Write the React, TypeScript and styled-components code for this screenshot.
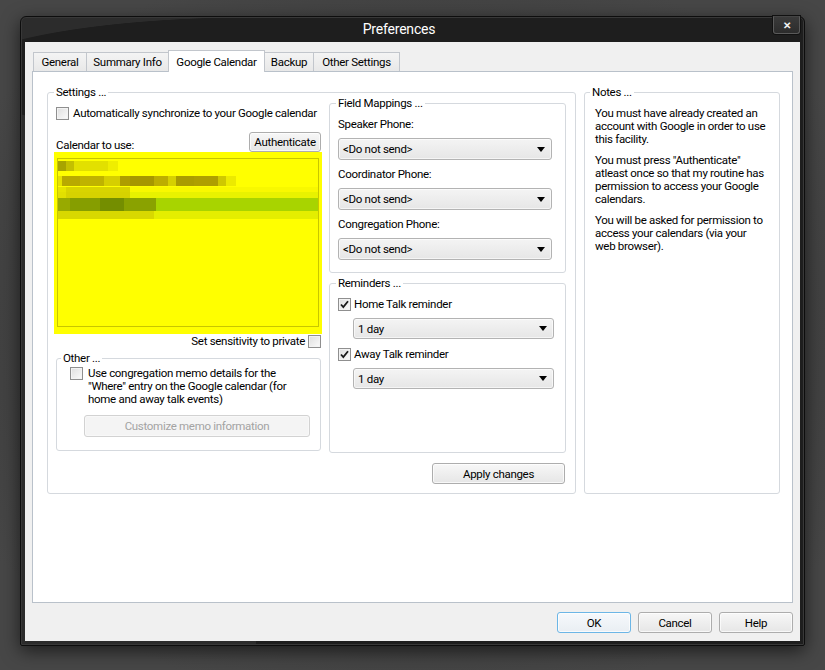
import styled, { createGlobalStyle } from "styled-components";

const GlobalStyle = createGlobalStyle`
  * { box-sizing: border-box; }
  html, body {
    margin: 0;
    padding: 0;
    background: #444444;
  }
  body {
    font-family: Roboto, "Liberation Sans", Arial, sans-serif;
    font-size: 11.5px;
    letter-spacing: -0.3px;
    color: #000;
  }
`;

type Seg = { w: number; c: string };
type MosaicLine = { gap: number; h: number; segs: Seg[] };

// pixelated (blurred out) calendar names inside the yellow highlight
const calendarRows: MosaicLine[] = [
  {
    gap: 2,
    h: 10,
    segs: [
      { w: 8, c: "#a8a400" },
      { w: 8, c: "#c4c000" },
      { w: 34, c: "#e2e000" },
      { w: 10, c: "#efee00" },
    ],
  },
  {
    gap: 5,
    h: 10,
    segs: [
      { w: 4, c: "#e6e200" },
      { w: 18, c: "#b8aa00" },
      { w: 24, c: "#bfb300" },
      { w: 16, c: "#d6cf00" },
      { w: 10, c: "#ad9d00" },
      { w: 24, c: "#a69700" },
      { w: 14, c: "#bcae00" },
      { w: 8, c: "#d6d000" },
      { w: 18, c: "#aa9c00" },
      { w: 24, c: "#ae9f00" },
      { w: 8, c: "#cfc800" },
      { w: 10, c: "#ecea00" },
    ],
  },
  {
    gap: 1,
    h: 5,
    segs: [
      { w: 8, c: "#e6e400" },
      { w: 64, c: "#d8d400" },
      { w: 188, c: "#f8f800" },
    ],
  },
  {
    gap: 0,
    h: 6,
    segs: [
      { w: 8, c: "#e2e000" },
      { w: 64, c: "#d6d200" },
      { w: 188, c: "#e8f200" },
    ],
  },
  {
    gap: 0,
    h: 13,
    segs: [
      { w: 12, c: "#98aa00" },
      { w: 30, c: "#869e00" },
      { w: 24, c: "#748e00" },
      { w: 32, c: "#8aa200" },
      { w: 163, c: "#a8d400" },
    ],
  },
  {
    gap: 0,
    h: 8,
    segs: [
      { w: 96, c: "#d8d800" },
      { w: 164, c: "#e4ee00" },
    ],
  },
];

function CheckBox({ checked = false }: { checked?: boolean }) {
  return (
    <Box>
      {checked && (
        <svg width="11" height="11" viewBox="0 0 11 11">
          <path
            d="M2 5.5 L4.3 8 L9 2.2"
            fill="none"
            stroke="#1a1a1a"
            strokeWidth="1.8"
          />
        </svg>
      )}
    </Box>
  );
}

function Dropdown({
  value,
  width,
  height,
}: {
  value: string;
  width: number;
  height: number;
}) {
  return (
    <Select $width={width} $height={height}>
      <span>{value}</span>
      <svg width="8" height="5" viewBox="0 0 8 5">
        <path d="M0 0 H8 L4 5 Z" fill="#000" />
      </svg>
    </Select>
  );
}

export default function App() {
  return (
    <Screen>
      <GlobalStyle />
      <Window>
        <TitleBar>
          <Title>Preferences</Title>
          <CloseButton>✕</CloseButton>
        </TitleBar>
        <Client>
          <TabStrip>
            <Tab $width={54}>General</Tab>
            <Tab $width={83}>Summary Info</Tab>
            <Tab $width={97} $active>
              Google Calendar
            </Tab>
            <Tab $width={50}>Backup</Tab>
            <Tab $width={87}>Other Settings</Tab>
          </TabStrip>
          <Panel>
            <GroupBox $width={529} $height={409}>
              <Legend>Settings ...</Legend>
              <SettingsGrid>
                <LeftColumn>
                  <CheckRow>
                    <CheckBox />
                    <span>Automatically synchronize to your Google calendar</span>
                  </CheckRow>
                  <CalendarHeader>
                    <LineLabel>Calendar to use:</LineLabel>
                    <Button $width={72} $height={20}>
                      Authenticate
                    </Button>
                  </CalendarHeader>
                  <Highlight>
                    <ListBox>
                      {calendarRows.map((row, i) => (
                        <MosaicRow key={i} $gap={row.gap} $h={row.h}>
                          {row.segs.map((s, j) => (
                            <span
                              key={j}
                              style={{ width: s.w, background: s.c }}
                            />
                          ))}
                        </MosaicRow>
                      ))}
                    </ListBox>
                  </Highlight>
                  <SensitivityRow>
                    <span>Set sensitivity to private</span>
                    <CheckBox />
                  </SensitivityRow>
                  <GroupBox $width={265} $height={100} $indent={4} $top={3}>
                    <Legend>Other ...</Legend>
                    <OtherBody>
                      <CheckRow $multiline $gap={5}>
                        <CheckBox />
                        <span>
                          Use congregation memo details for the
                          <br />
                          "Where" entry on the Google calendar (for
                          <br />
                          home and away talk events)
                        </span>
                      </CheckRow>
                      <Button $width={226} $height={22} $disabled>
                        Customize memo information
                      </Button>
                    </OtherBody>
                  </GroupBox>
                </LeftColumn>
                <RightColumn>
                  <GroupBox $width={237} $height={177}>
                    <Legend>Field Mappings ...</Legend>
                    <FieldBody>
                      <LineLabel>Speaker Phone:</LineLabel>
                      <Dropdown value="<Do not send>" width={214} height={22} />
                      <LineLabel>Coordinator Phone:</LineLabel>
                      <Dropdown value="<Do not send>" width={214} height={22} />
                      <LineLabel>Congregation Phone:</LineLabel>
                      <Dropdown value="<Do not send>" width={214} height={22} />
                    </FieldBody>
                  </GroupBox>
                  <GroupBox $width={237} $height={177} $top={3}>
                    <Legend>Reminders ...</Legend>
                    <ReminderBody>
                      <CheckRow $gap={3}>
                        <CheckBox checked />
                        <span>Home Talk reminder</span>
                      </CheckRow>
                      <Indented>
                        <Dropdown value="1 day" width={201} height={21} />
                      </Indented>
                      <CheckRow $gap={3}>
                        <CheckBox checked />
                        <span>Away Talk reminder</span>
                      </CheckRow>
                      <Indented>
                        <Dropdown value="1 day" width={201} height={21} />
                      </Indented>
                    </ReminderBody>
                  </GroupBox>
                  <ApplyWrap>
                    <Button $width={133} $height={21}>
                      Apply changes
                    </Button>
                  </ApplyWrap>
                </RightColumn>
              </SettingsGrid>
            </GroupBox>
            <GroupBox $width={196} $height={409} $indent={5}>
              <Legend>Notes ...</Legend>
              <Notes>
                <p>
                  You must have already created an
                  <br />
                  account with Google in order to use
                  <br />
                  this facility.
                </p>
                <p>
                  You must press "Authenticate"
                  <br />
                  atleast once so that my routine has
                  <br />
                  permission to access your Google
                  <br />
                  calendars.
                </p>
                <p>
                  You will be asked for permission to
                  <br />
                  access your calendars (via your
                  <br />
                  web browser).
                </p>
              </Notes>
            </GroupBox>
          </Panel>
          <DialogButtons>
            <Button $width={74} $height={21} $default>
              OK
            </Button>
            <Button $width={74} $height={21}>
              Cancel
            </Button>
            <Button $width={74} $height={21}>
              Help
            </Button>
          </DialogButtons>
        </Client>
      </Window>
    </Screen>
  );
}

const Screen = styled.div`
  width: 825px;
  height: 670px;
  padding: 16px 20px 0 20px;
  background: radial-gradient(ellipse 520px 380px at 412px 330px, #3d3d3d 60%, #474747 100%);
  overflow: hidden;
`;

const Window = styled.div`
  width: 785px;
  height: 630px;
  display: flex;
  flex-direction: column;
  padding: 0 4px 4px 4px;
  border: 1px solid #0d0d0d;
  border-radius: 6px 6px 2px 2px;
  background: radial-gradient(303px 60px at 235px 60px, #1e1e1e 99%, rgba(30, 30, 30, 0) 100%),
    linear-gradient(90deg, #2c2c2c 235px, #1e1e1e 235px);
  box-shadow: inset 0 0 0 1px #383838, 0 5px 18px rgba(0, 0, 0, 0.6);
`;

const TitleBar = styled.div`
  height: 25px;
  display: flex;
  align-items: flex-start;
`;

const Title = styled.div`
  flex: 1;
  text-align: center;
  line-height: 25px;
  font-size: 14px;
  letter-spacing: -0.2px;
  color: #ffffff;
`;

const CloseButton = styled.div`
  width: 27px;
  height: 18px;
  margin-top: -1px;
  display: flex;
  align-items: center;
  justify-content: center;
  border: 1px solid #5a5a5a;
  border-top-color: #444;
  border-radius: 0 0 3px 3px;
  background: linear-gradient(#3a3a3a, #2c2c2c);
  box-shadow: 0 0 0 1px #111;
  color: #f2f2f2;
  font-size: 10px;
  font-weight: 700;
  letter-spacing: 0;
`;

const Client = styled.div`
  flex: 1;
  display: flex;
  flex-direction: column;
  padding: 10px 7px 8px 7px;
  background: #f0f0f0;
`;

const TabStrip = styled.div`
  height: 19px;
  display: flex;
  align-items: flex-end;
  padding-left: 1px;
`;

const Tab = styled.div<{ $width: number; $active?: boolean }>`
  position: relative;
  width: ${(p) => p.$width}px;
  height: ${(p) => (p.$active ? 22 : 19)}px;
  margin-left: -1px;
  margin-bottom: ${(p) => (p.$active ? -1 : 0)}px;
  z-index: ${(p) => (p.$active ? 2 : 1)};
  display: flex;
  align-items: center;
  justify-content: center;
  padding-bottom: ${(p) => (p.$active ? 0 : 1)}px;
  border: 1px solid #c2c6cc;
  border-bottom: none;
  background: ${(p) =>
    p.$active ? "#ffffff" : "linear-gradient(#f4f4f4, #e8e8e8)"};
  white-space: nowrap;
  &:first-child {
    margin-left: 0;
  }
`;

const Panel = styled.div`
  height: 532px;
  display: flex;
  align-items: flex-start;
  gap: 8px;
  padding: 13px 13px 0 14px;
  border: 1px solid #b9c1ca;
  background: #ffffff;
`;

const GroupBox = styled.fieldset<{
  $width: number;
  $height: number;
  $indent?: number;
  $top?: number;
}>`
  width: ${(p) => p.$width}px;
  height: ${(p) => p.$height}px;
  margin: ${(p) => p.$top ?? 0}px 0 0 0;
  padding: 0;
  min-width: 0;
  flex: none;
  border: 1px solid #d5d9de;
  border-radius: 3px;

  & > legend {
    margin-left: ${(p) => p.$indent ?? 6}px;
  }
`;

const Legend = styled.legend`
  padding: 0 2px;
  line-height: 14px;
`;

const SettingsGrid = styled.div`
  display: grid;
  grid-template-columns: 266px 237px;
  column-gap: 7px;
  margin-top: -3px;
  padding-left: 8px;
`;

const LeftColumn = styled.div`
  display: flex;
  flex-direction: column;
  padding-top: 10px;
`;

const RightColumn = styled.div`
  display: flex;
  flex-direction: column;
`;

const CheckRow = styled.div<{ $multiline?: boolean; $gap?: number }>`
  display: flex;
  align-items: ${(p) => (p.$multiline ? "flex-start" : "center")};
  gap: ${(p) => p.$gap ?? 4}px;
  line-height: ${(p) => (p.$multiline ? 13 : 14)}px;
  white-space: nowrap;
`;

const Box = styled.span`
  width: 13px;
  height: 13px;
  flex: none;
  display: flex;
  align-items: center;
  justify-content: center;
  border: 1px solid #8f8f8f;
  background: linear-gradient(135deg, #dedede, #fbfbfb);
  box-shadow: inset 0 0 0 1px #f3f3f3;
`;

const CalendarHeader = styled.div`
  display: flex;
  align-items: flex-end;
  justify-content: space-between;
  margin-top: 12px;
  padding-right: 1px;
`;

const LineLabel = styled.div`
  line-height: 14px;
  white-space: nowrap;
`;

const Button = styled.div<{
  $width: number;
  $height: number;
  $disabled?: boolean;
  $default?: boolean;
}>`
  width: ${(p) => p.$width}px;
  height: ${(p) => p.$height}px;
  flex: none;
  display: flex;
  align-items: center;
  justify-content: center;
  border: 1px solid
    ${(p) => (p.$default ? "#6cb6e6" : p.$disabled ? "#d2d2d2" : "#adadad")};
  border-radius: 3px;
  background: ${(p) =>
    p.$disabled
      ? "#f4f4f4"
      : p.$default
      ? "linear-gradient(#f6f9fc, #e9eef3)"
      : "linear-gradient(#f7f7f7, #e6e6e6)"};
  box-shadow: inset 0 0 0 1px
    ${(p) => (p.$disabled ? "#f8f8f8" : "rgba(255, 255, 255, 0.7)")};
  color: ${(p) => (p.$disabled ? "#a3a3a3" : "#000")};
  white-space: nowrap;
`;

const Highlight = styled.div`
  margin-left: -2px;
  padding: 6px 3px 7px 3px;
  background: #ffff00;
`;

const ListBox = styled.div`
  height: 169px;
  border: 1px solid #c8c600;
  display: flex;
  flex-direction: column;
  overflow: hidden;
`;

const MosaicRow = styled.div<{ $gap: number; $h: number }>`
  display: flex;
  flex: none;
  margin-top: ${(p) => p.$gap}px;
  height: ${(p) => p.$h}px;
  & > span {
    flex: none;
    height: 100%;
  }
`;

const SensitivityRow = styled.div`
  display: flex;
  align-items: center;
  justify-content: flex-end;
  gap: 3px;
  height: 14px;
  padding-right: 1px;
  white-space: nowrap;
`;

const OtherBody = styled.div`
  display: flex;
  flex-direction: column;
  align-items: flex-start;
  gap: 9px;
  padding: 2px 0 0 13px;

  & > ${Button} {
    margin-left: 14px;
  }
`;

const FieldBody = styled.div`
  display: flex;
  flex-direction: column;
  align-items: flex-start;
  gap: 7px;
  padding: 7px 0 0 8px;
`;

const ReminderBody = styled.div`
  display: flex;
  flex-direction: column;
  align-items: flex-start;
  padding: 7px 0 0 8px;
`;

const Indented = styled.div`
  padding-left: 15px;
  margin-top: 7px;
  margin-bottom: 8px;
`;

const Select = styled.div<{ $width: number; $height: number }>`
  width: ${(p) => p.$width}px;
  height: ${(p) => p.$height}px;
  display: flex;
  align-items: center;
  justify-content: space-between;
  padding: 0 6px 0 4px;
  border: 1px solid #b3b3b3;
  border-radius: 3px;
  background: linear-gradient(#f4f4f4, #e6e6e6);
  box-shadow: inset 0 0 0 1px rgba(255, 255, 255, 0.6);
  white-space: nowrap;
`;

const ApplyWrap = styled.div`
  display: flex;
  justify-content: flex-end;
  margin-top: 10px;
  padding-right: 1px;
`;

const Notes = styled.div`
  padding: 8px 0 0 10px;
  line-height: 13px;
  white-space: nowrap;

  p {
    margin: 0 0 8px 0;
  }
`;

const DialogButtons = styled.div`
  display: flex;
  justify-content: flex-end;
  gap: 7px;
  margin-top: 9px;
`;
